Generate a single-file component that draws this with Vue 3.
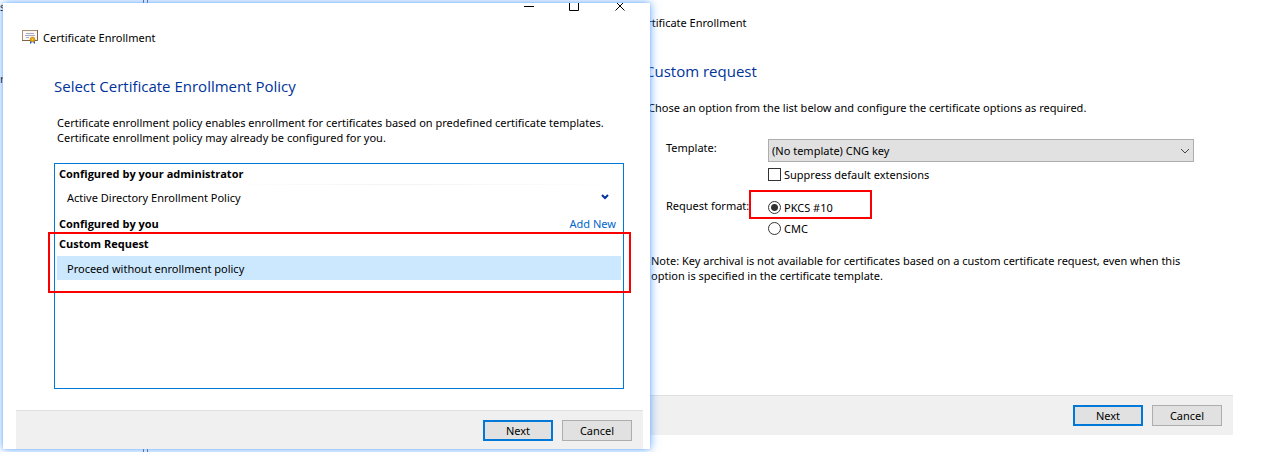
<script setup>
import { ref } from 'vue'

const template = ref('cng')
const suppress = ref(false)
const format = ref('pkcs10')
</script>

<template>
  <main class="desktop">
    <div class="console" aria-hidden="true">
      <span class="tree">
        <span>s</span>
        <span>r</span>
      </span>
      <span class="splitter"></span>
    </div>

    <section class="dialog front">
      <div class="controls">
        <button type="button" aria-label="Minimize">
          <svg width="12" height="8" viewBox="0 0 12 8"><path d="M2 3.5H12" /></svg>
        </button>
        <button type="button" aria-label="Maximize">
          <svg width="12" height="8" viewBox="0 0 12 8"><path d="M1.5 -2V7.5H10.5V-2" /></svg>
        </button>
        <button type="button" aria-label="Close">
          <svg width="12" height="8" viewBox="0 0 12 8"><path d="M1 -2L10.5 7.5M11 -2L1.5 7.5" /></svg>
        </button>
      </div>

      <header class="title">
        <svg width="16" height="14" viewBox="0 0 16 14">
          <rect x="0.5" y="0.5" width="15" height="10" fill="#fbf8f4" stroke="#a98f78" />
          <path d="M15.5 0V10.5H0" fill="none" stroke="#7d614b" />
          <path d="M4 3.5H12M3 5.5H13M4 7.5H7" stroke="#a9a9c6" fill="none" />
          <path d="M8 10V14L9.500 13L10 10ZM11 10L11.500 13L13 14V10Z" fill="#1f63d0" />
          <circle cx="10.500" cy="9.500" r="2.500" fill="#e5a00d" stroke="#b87c08" stroke-width="0.500" />
          <circle cx="10.500" cy="9.500" r="0.800" fill="#f8d264" />
        </svg>
        <span>Certificate Enrollment</span>
      </header>

      <h1>Select Certificate Enrollment Policy</h1>
      <p class="intro">
        Certificate enrollment policy enables enrollment for certificates based on predefined certificate templates.<br />
        Certificate enrollment policy may already be configured for you.
      </p>

      <div class="policies">
        <h2>Configured by your administrator</h2>
        <div class="policy">
          <span>Active Directory Enrollment Policy</span>
          <button type="button" class="expand" aria-label="Show details">
            <svg width="8" height="6" viewBox="0 0 8 6"><path d="M1 1L4 4L7 1" /></svg>
          </button>
        </div>
        <h2 class="own">
          <span>Configured by you</span>
          <a href="#">Add New</a>
        </h2>
        <div class="custom">
          <h2>Custom Request</h2>
          <button type="button" class="choice" aria-pressed="true">Proceed without enrollment policy</button>
          <span class="mark"></span>
        </div>
      </div>

      <footer>
        <button type="button" class="push primary">Next</button>
        <button type="button" class="push">Cancel</button>
      </footer>
    </section>

    <section class="dialog back">
      <header class="title">
        <span>Certificate Enrollment</span>
      </header>
      <h1>Custom request</h1>
      <p class="intro">Chose an option from the list below and configure the certificate options as required.</p>

      <form class="options" @submit.prevent>
        <label class="name" for="template">Template:</label>
        <div class="field">
          <div class="combo">
            <select id="template" v-model="template">
              <option value="cng">(No template) CNG key</option>
            </select>
            <svg width="10" height="6" viewBox="0 0 10 6"><path d="M1 1L5 5L9 1" /></svg>
          </div>
          <label class="tick"><input v-model="suppress" type="checkbox" />Suppress default extensions</label>
        </div>
        <span id="format" class="name">Request format:</span>
        <div class="radios" role="radiogroup" aria-labelledby="format">
          <label class="tick"><input v-model="format" type="radio" name="format" value="pkcs10" />PKCS #10</label>
          <label class="tick"><input v-model="format" type="radio" name="format" value="cmc" />CMC</label>
          <span class="mark"></span>
        </div>
      </form>

      <p class="note">
        Note: Key archival is not available for certificates based on a custom certificate request, even when this<br />
        option is specified in the certificate template.
      </p>

      <footer>
        <button type="button" class="push primary">Next</button>
        <button type="button" class="push">Cancel</button>
      </footer>
    </section>
  </main>
</template>

<style>
body {
  background: #fff;
}
</style>

<style scoped>
.desktop {
  position: relative;
  display: flex;
  box-sizing: border-box;
  min-height: 100vh;
  padding: 0 31px 0 3px;
  overflow: hidden;
  color: #000;
  font: 11px/15px "Noto Sans", "Open Sans", sans-serif;
}

h1, h2, p {
  margin: 0;
}

button, select, input {
  margin: 0;
  padding: 0;
  font: inherit;
  color: inherit;
}

.console {
  position: absolute;
  inset: 0 50% 0 0;
}

.tree {
  position: absolute;
  top: -1px;
  left: 0;
  display: grid;
  gap: 57px;
}

.splitter {
  position: absolute;
  top: 0;
  bottom: 0;
  left: 143px;
  width: 3px;
  border: solid #5c7090;
  border-width: 0 1px;
}

.dialog {
  display: flex;
  flex-direction: column;
  min-width: 0;
  background: #fff;
  white-space: nowrap;
}

.front {
  position: relative;
  z-index: 1;
  flex: 647 1 0;
  margin: 3px 0;
  box-shadow: 0 0 1px #7ab8ff, 0 0 9px rgba(50, 140, 255, 0.8);
}

.back {
  flex: 613 1 0;
  margin: 0 0 17px -30px;
}

.controls {
  display: flex;
  justify-content: flex-end;
  gap: 34px;
  padding-right: 24px;
}

.controls button {
  display: flex;
  border: 0;
  background: none;
}

.controls path {
  fill: none;
  stroke: #000;
}

.title {
  display: flex;
  align-items: center;
  gap: 5px;
  height: 20px;
  margin: 16px 0 0 19px;
}

.back .title {
  margin: 12px 0 0 14px;
}

h1 {
  margin: 27px 0 0 51px;
  color: #003399;
  font-family: "Open Sans", "Noto Sans", sans-serif;
  font-size: 15px;
  font-weight: 400;
  line-height: 24px;
}

.back h1 {
  margin-left: 25px;
}

.intro {
  margin: 17px 0 0 54px;
}

.back .intro {
  margin-left: 28px;
}

.policies {
  flex: 1;
  margin: 18px 26px 21px 51px;
  padding: 0 2px;
  border: 1px solid #0078d7;
}

h2 {
  padding: 0 2px;
  font-family: "Open Sans", "Noto Sans", sans-serif;
  font-size: 11px;
  font-weight: 700;
  line-height: 20px;
}

.policy {
  display: flex;
  align-items: center;
  justify-content: space-between;
  height: 26px;
  padding: 0 10px;
  background: linear-gradient(90deg, transparent 30%, #f3f3f3 60%, transparent) top / 100% 1px no-repeat;
}

.expand {
  display: flex;
  padding: 2px;
  border: 0;
  background: none;
}

.expand path {
  fill: none;
  stroke: #003399;
  stroke-width: 2;
}

.own {
  display: flex;
  justify-content: space-between;
  margin-top: 4px;
  padding-right: 5px;
}

.own a {
  color: #0066cc;
  font-family: "Noto Sans", "Open Sans", sans-serif;
  font-weight: 400;
  text-decoration: none;
}

.custom {
  position: relative;
}

.choice {
  width: 100%;
  height: 24px;
  margin-top: 2px;
  padding: 0 10px;
  border: 0;
  background: #cce8ff;
  text-align: left;
}

.mark {
  position: absolute;
  border: 2px solid #fb0000;
  pointer-events: none;
}

.custom .mark {
  inset: -2px -10px -13px -9px;
}

footer {
  display: flex;
  justify-content: flex-end;
  gap: 9px;
  box-sizing: border-box;
  height: 39px;
  margin: 0 7px 0 13px;
  padding: 9px 11px 0 0;
  border-top: 1px solid #dfdfdf;
  background: #f0f0f0;
}

.back footer {
  height: 40px;
  margin: auto 0 0;
}

.push {
  width: 70px;
  height: 21px;
  border: 1px solid #adadad;
  background: #e1e1e1;
}

.push.primary {
  border: 2px solid #0078d7;
}

.options {
  display: grid;
  grid-template-columns: 102px 1fr;
  row-gap: 12px;
  margin: 24px 39px 0 46px;
}

.name {
  line-height: 18px;
}

.field {
  display: grid;
  gap: 2px;
}

.combo {
  display: flex;
  align-items: center;
}

.combo select {
  flex: 1;
  height: 23px;
  padding: 0 3px;
  border: 1px solid #adadad;
  border-radius: 0;
  background: #e1e1e1;
  appearance: none;
}

.combo svg {
  margin: 0 4px 0 -14px;
  pointer-events: none;
}

.combo path {
  fill: none;
  stroke: #444;
}

.tick {
  display: flex;
  align-items: center;
  gap: 3px;
  height: 21px;
}

.tick input {
  box-sizing: border-box;
  width: 13px;
  height: 13px;
  border: 1px solid #333;
  background: #fff;
  appearance: none;
}

.tick input[type="radio"] {
  border-radius: 50%;
}

.tick input[type="radio"]:checked {
  background: radial-gradient(circle, #333 3px, #fff 4px);
}

.radios {
  position: relative;
}

.radios .mark {
  top: -7px;
  left: -19px;
  width: 119px;
  height: 25px;
}

.note {
  margin: 14px 0 0 31px;
}
</style>
